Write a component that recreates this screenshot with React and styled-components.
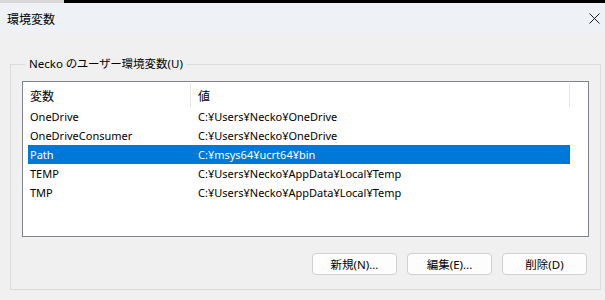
import React from 'react';
import styled, { createGlobalStyle } from 'styled-components';

const GlobalStyle = createGlobalStyle`
  html, body {
    margin: 0;
    padding: 0;
    background: #f0f0f0;
  }
  body {
    font-family: "Noto Sans", "Noto Sans CJK JP", sans-serif;
    font-size: 11px;
    color: #000;
  }
`;

const Window = styled.div`
  width: 605px;
  height: 300px;
  display: flex;
  flex-direction: column;
  background: #f0f0f0;
  overflow: hidden;
`;

const TopStrip = styled.div`
  height: 3px;
  display: flex;
  flex-shrink: 0;
`;

const StripPart = styled.div`
  width: ${p => (p.$grow ? 'auto' : `${p.$w}px`)};
  flex: ${p => (p.$grow ? 1 : 'none')};
  background: ${p => p.$color};
`;

const TitleBar = styled.div`
  height: 30px;
  flex-shrink: 0;
  display: flex;
  align-items: center;
  justify-content: space-between;
  padding: 0 3px 0 7px;
  background: #eef2f6;
  font-family: "Noto Sans CJK JP", sans-serif;
  font-size: 12px;
`;

const CloseButton = styled.div`
  width: 16px;
  height: 16px;
  display: flex;
  align-items: center;
  justify-content: center;
`;

const Body = styled.div`
  flex: 1;
  padding: 22px 4px 0 10px;
`;

const Group = styled.fieldset`
  margin: 0;
  padding: 0 11px 14px 11px;
  border: 1px solid #dcdcdc;
  min-width: 0;
`;

const GroupLabel = styled.legend`
  margin-left: 3px;
  padding: 0 4px 0 4px;
  line-height: 18px;
  font-size: 11.5px;
  font-feature-settings: "palt";
  color: #000;
`;

const ListBox = styled.div`
  margin-top: 8px;
  height: 153px;
  border: 1px solid #7f848b;
  background: #fff;
  padding: 1px 0 0 5px;
`;

const Grid = styled.div`
  display: grid;
  grid-template-columns: 163px 379px;
`;

const HeaderCell = styled.div`
  height: 24px;
  display: flex;
  align-items: center;
  padding-left: ${p => (p.$first ? '2px' : '7px')};
  border-right: 1px solid #e5e5e5;
  box-sizing: border-box;
  font-family: "Noto Sans CJK JP", sans-serif;
  font-size: 12px;
`;

const Row = styled.div`
  display: contents;
`;

const Cell = styled.div`
  height: 19px;
  line-height: 20px;
  padding-left: ${p => (p.$first ? '2px' : '7px')};
  white-space: nowrap;
  background: ${p => (p.$selected ? '#0078d7' : 'transparent')};
  color: ${p => (p.$selected ? '#fff' : '#000')};
`;

const ButtonRow = styled.div`
  display: flex;
  justify-content: flex-end;
  gap: 10px;
  margin-top: 16px;
  padding-right: 2px;
`;

const Button = styled.div`
  width: 85px;
  height: 22px;
  box-sizing: border-box;
  border: 1px solid #d0d0d0;
  border-radius: 4px;
  background: #fdfdfd;
  display: flex;
  align-items: center;
  justify-content: center;
  font-size: 11.5px;
`;

const vars = [
  { name: 'OneDrive', value: 'C:¥Users¥Necko¥OneDrive' },
  { name: 'OneDriveConsumer', value: 'C:¥Users¥Necko¥OneDrive' },
  { name: 'Path', value: 'C:¥msys64¥ucrt64¥bin', selected: true },
  { name: 'TEMP', value: 'C:¥Users¥Necko¥AppData¥Local¥Temp' },
  { name: 'TMP', value: 'C:¥Users¥Necko¥AppData¥Local¥Temp' },
];

export default function App() {
  return (
    <Window>
      <GlobalStyle />
      <TopStrip>
        <StripPart $w={64} $color="#d8d8d8" />
        <StripPart $grow $color="#000" />
      </TopStrip>
      <TitleBar>
        <span>環境変数</span>
        <CloseButton>
          <svg width="11" height="11" viewBox="0 0 11 11">
            <path d="M0.5 0.5 L10.5 10.5 M10.5 0.5 L0.5 10.5" stroke="#1a1a1a" strokeWidth="1" fill="none" />
          </svg>
        </CloseButton>
      </TitleBar>
      <Body>
        <Group>
          <GroupLabel>Necko のユーザー環境変数(U)</GroupLabel>
          <ListBox>
            <Grid>
              <HeaderCell $first>変数</HeaderCell>
              <HeaderCell>値</HeaderCell>
              {vars.map(v => (
                <Row key={v.name}>
                  <Cell $first $selected={v.selected}>{v.name}</Cell>
                  <Cell $selected={v.selected}>{v.value}</Cell>
                </Row>
              ))}
            </Grid>
          </ListBox>
          <ButtonRow>
            <Button>新規(N)...</Button>
            <Button>編集(E)...</Button>
            <Button>削除(D)</Button>
          </ButtonRow>
        </Group>
      </Body>
    </Window>
  );
}
